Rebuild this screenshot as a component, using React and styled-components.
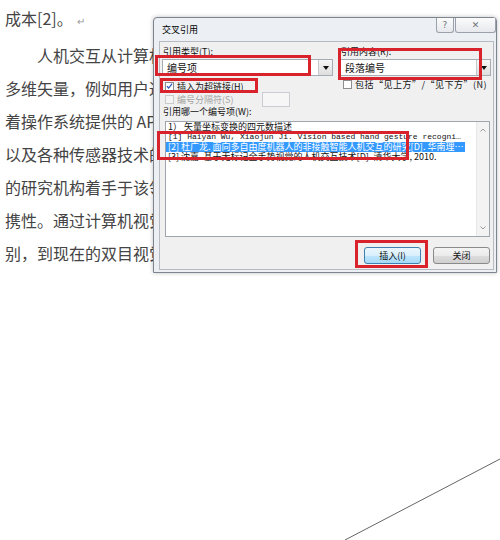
import React from 'react';
import styled, { createGlobalStyle } from 'styled-components';

const GlobalStyle = createGlobalStyle`
    html, body {
        margin: 0;
        padding: 0;
        background: #fff;
    }
    body {
        width: 500px;
        height: 540px;
        overflow: hidden;
    }
`;

const Page = styled.div`
    position: relative;
    width: 500px;
    height: 540px;
    overflow: hidden;
    background: #fff;
    font-family: "Noto Sans CJK SC", sans-serif;
`;

const Doc = styled.div`
    padding: 2px 0 0 5px;
    color: #444;
    font-size: 16px;
    white-space: nowrap;
`;

const Line = styled.p`
    margin: ${(p) => p.$gap || 0}px 0 0 0;
    height: 33px;
    line-height: 33px;
    text-indent: ${(p) => (p.$indent ? '32px' : '0')};
`;

const ParaMark = styled.span`
    font-size: 10px;
    color: #999;
    margin-left: 4px;
`;

const PageEdge = styled.svg`
    position: absolute;
    left: 0;
    top: 0;
    pointer-events: none;
`;

const Dialog = styled.div`
    position: absolute;
    left: 153px;
    top: 17px;
    width: 344px;
    box-sizing: border-box;
    border: 1px solid #7d8591;
    border-radius: 4px 4px 0 0;
    background: #eceff3;
    box-shadow: 0 0 4px rgba(0, 0, 0, 0.25);
    font-size: 9px;
    color: #111;
`;

const TitleBar = styled.div`
    height: 23px;
    display: flex;
    align-items: center;
    padding-left: 8px;
`;

const Title = styled.span`
    font-size: 9px;
    color: #000;
`;

const CaptionButtons = styled.div`
    margin-left: auto;
    align-self: flex-start;
    display: flex;
    gap: 1px;
`;

const CaptionButton = styled.div`
    width: ${(p) => p.$w}px;
    height: 15px;
    box-sizing: border-box;
    border: 1px solid #9aa1aa;
    border-top: none;
    border-radius: 0 0 3px 3px;
    background: linear-gradient(#fbfbfb, #e6e9ed);
    display: flex;
    align-items: center;
    justify-content: center;
    color: #6d737b;
    font-size: 9px;
    font-family: "DejaVu Sans", sans-serif;
`;

const Client = styled.div`
    margin: 0 2px 2px 5px;
    border: 1px solid #b7bbc1;
    background: #f0f0f0;
    padding: 4px 2px 5px 2px;
`;

const TopGrid = styled.div`
    display: grid;
    grid-template-columns: 171px 151px;
    column-gap: 7px;
`;

const Col = styled.div`
    display: flex;
    flex-direction: column;
`;

const FieldLabel = styled.div`
    height: 12px;
    line-height: 12px;
    padding-left: 1px;
    white-space: nowrap;
`;

const Combo = styled.div`
    margin-top: 1px;
    height: 17px;
    box-sizing: border-box;
    border: 1px solid #a5acb5;
    background: #fff;
    display: flex;
    align-items: stretch;
`;

const ComboText = styled.span`
    flex: 1;
    padding-left: 4px;
    font-size: 10px;
    line-height: 15px;
`;

const ComboArrow = styled.span`
    width: 13px;
    border-left: 1px solid #c3c8cf;
    background: linear-gradient(#f7f7f7, #dedede);
    display: flex;
    align-items: center;
    justify-content: center;
`;

const CheckRow = styled.div`
    display: flex;
    align-items: center;
    gap: 3px;
    height: ${(p) => p.$h || 14}px;
    margin-top: ${(p) => p.$mt || 0}px;
    padding-left: 3px;
    color: ${(p) => (p.$disabled ? '#a3a3a3' : '#111')};
    white-space: nowrap;
    letter-spacing: ${(p) => p.$ls || 0}px;
`;

const CheckBox = styled.span`
    width: 9px;
    height: 9px;
    flex: none;
    box-sizing: border-box;
    border: 1px solid ${(p) => (p.$disabled ? '#cacaca' : '#8e8f8f')};
    background: ${(p) => (p.$disabled ? '#f4f4f4' : '#fff')};
    display: flex;
    align-items: center;
    justify-content: center;
`;

const SepInput = styled.span`
    width: 28px;
    height: 15px;
    flex: none;
    box-sizing: border-box;
    margin-left: 26px;
    border: 1px solid #c9cdd3;
    background: #f6f6f6;
`;

const ListBox = styled.div`
    margin: 3px 1px 0 3px;
    height: 116px;
    box-sizing: border-box;
    border: 1px solid #9ea5ae;
    background: #fff;
    display: flex;
`;

const Items = styled.div`
    flex: 1;
    min-width: 0;
    padding-right: 11px;
`;

const Item = styled.div`
    height: 10px;
    line-height: 10px;
    font-size: ${(p) => (p.$mono ? 8 : 9)}px;
    padding-left: 2px;
    white-space: nowrap;
    overflow: hidden;
    text-overflow: ellipsis;
    background: ${(p) => (p.$selected ? '#3399ff' : 'transparent')};
    color: ${(p) => (p.$selected ? '#fff' : '#111')};
    font-family: ${(p) => (p.$mono ? '"Liberation Mono", monospace' : 'inherit')};
`;

const ScrollBar = styled.div`
    width: 13px;
    background: #f3f3f3;
    border-left: 1px solid #e8e8e8;
    display: flex;
    flex-direction: column;
    justify-content: space-between;
    align-items: center;
    padding: 6px 0;
    box-sizing: border-box;
`;

const ButtonRow = styled.div`
    display: flex;
    justify-content: flex-end;
    gap: 12px;
    margin-top: 10px;
    padding-right: 1px;
`;

const Button = styled.button`
    width: 57px;
    height: 17px;
    padding: 0;
    box-sizing: border-box;
    border: 1px solid ${(p) => (p.$default ? '#3c7fb1' : '#8a8a8a')};
    border-radius: 3px;
    background: ${(p) =>
        p.$default
            ? 'linear-gradient(#eaf6fd 0%, #d9f0fc 50%, #bee6fd 51%, #a7d9f5 100%)'
            : 'linear-gradient(#f4f4f4 0%, #ebebeb 50%, #dddddd 51%, #cfcfcf 100%)'};
    font-family: "Noto Sans CJK SC", sans-serif;
    font-size: 9px;
    color: #111;
`;

const Mark = styled.div`
    position: absolute;
    left: ${(p) => p.$x}px;
    top: ${(p) => p.$y}px;
    width: ${(p) => p.$w}px;
    height: ${(p) => p.$h}px;
    box-sizing: border-box;
    border: 3px solid #d8232d;
    pointer-events: none;
`;

const docLines = [
    '人机交互从计算机诞生以来经历了从命令行到图形界面的',
    '多维矢量，例如用户通过鼠标、键盘等输入设备完成操作',
    '着操作系统提供的 API 接口进行交互。随着计算机技术',
    '以及各种传感器技术的发展，越来越多的人机交互方式',
    '的研究机构着手于该领域的研究，以提高人机交互的便',
    '携性。通过计算机视觉进行手势识别，从最初的单目识',
    '别，到现在的双目视觉和深度摄像头的应用',
];

const items = [
    { text: '1）  矢量坐标变换的四元数描述' },
    { text: '[1] Haiyan Wu, Xiaojun Ji. Vision based hand gesture recognit…', mono: true },
    { text: '[2] 杜广龙. 面向多自由度机器人的非接触智能人机交互的研究[D]. 华南理工大学', selected: true },
    { text: '[3] 沈嘉. 基于无标记全手势视觉的人机交互技术[D]. 清华大学, 2010.' },
];

const Check = () => (
    <svg width="8" height="8" viewBox="0 0 8 8">
        <path d="M1 4.2 L3 6.3 L7 1.2" fill="none" stroke="#2a55b8" strokeWidth="1.4" />
    </svg>
);

const Down = () => (
    <svg width="6" height="4" viewBox="0 0 6 4">
        <path d="M0 0 H6 L3 4 Z" fill="#111" />
    </svg>
);

const ScrollArrow = ({ up }) => (
    <svg width="6" height="4" viewBox="0 0 6 4">
        <path d={up ? 'M0.5 3.5 L3 1 L5.5 3.5' : 'M0.5 0.5 L3 3 L5.5 0.5'} fill="none" stroke="#9a9a9a" strokeWidth="1" />
    </svg>
);

const App = () => {
    return (
        <Page>
            <GlobalStyle />
            <Doc>
                <Line>
                    成本[2]。<ParaMark>↵</ParaMark>
                </Line>
                {docLines.map((text, i) => (
                    <Line key={i} $indent={i === 0} $gap={i === 0 ? 4 : 0}>
                        {text}
                    </Line>
                ))}
            </Doc>

            <PageEdge width="500" height="540">
                <line x1="345" y1="540" x2="500" y2="459" stroke="#666" strokeWidth="1" />
            </PageEdge>

            <Dialog>
                <TitleBar>
                    <Title>交叉引用</Title>
                    <CaptionButtons>
                        <CaptionButton $w={18}>?</CaptionButton>
                        <CaptionButton $w={41}>✕</CaptionButton>
                    </CaptionButtons>
                </TitleBar>
                <Client>
                    <TopGrid>
                        <Col>
                            <FieldLabel>引用类型(T):</FieldLabel>
                            <Combo>
                                <ComboText>编号项</ComboText>
                                <ComboArrow><Down /></ComboArrow>
                            </Combo>
                            <CheckRow $mt={3}>
                                <CheckBox><Check /></CheckBox>
                                插入为超链接(H)
                            </CheckRow>
                            <CheckRow $h={13} $disabled>
                                <CheckBox $disabled />
                                编号分隔符(S)
                                <SepInput />
                            </CheckRow>
                        </Col>
                        <Col>
                            <FieldLabel>引用内容(R):</FieldLabel>
                            <Combo>
                                <ComboText>段落编号</ComboText>
                                <ComboArrow><Down /></ComboArrow>
                            </Combo>
                            <CheckRow $mt={1} $ls={0.5}>
                                <CheckBox />
                                包括“见上方”/“见下方”(N)
                            </CheckRow>
                        </Col>
                    </TopGrid>
                    <FieldLabel>引用哪一个编号项(W):</FieldLabel>
                    <ListBox>
                        <Items>
                            {items.map((it, i) => (
                                <Item key={i} $selected={it.selected} $mono={it.mono}>
                                    {it.text}
                                </Item>
                            ))}
                        </Items>
                        <ScrollBar>
                            <ScrollArrow up />
                            <ScrollArrow />
                        </ScrollBar>
                    </ListBox>
                    <ButtonRow>
                        <Button $default>插入(I)</Button>
                        <Button>关闭</Button>
                    </ButtonRow>
                </Client>

                <Mark $x={1} $y={37} $w={156} $h={21} />
                <Mark $x={6} $y={60} $w={98} $h={15} />
                <Mark $x={3} $y={113} $w={252} $h={29} />
                <Mark $x={184} $y={30} $w={144} $h={32} />
                <Mark $x={201} $y={222} $w={73} $h={28} />
            </Dialog>
        </Page>
    );
};

export default App;
